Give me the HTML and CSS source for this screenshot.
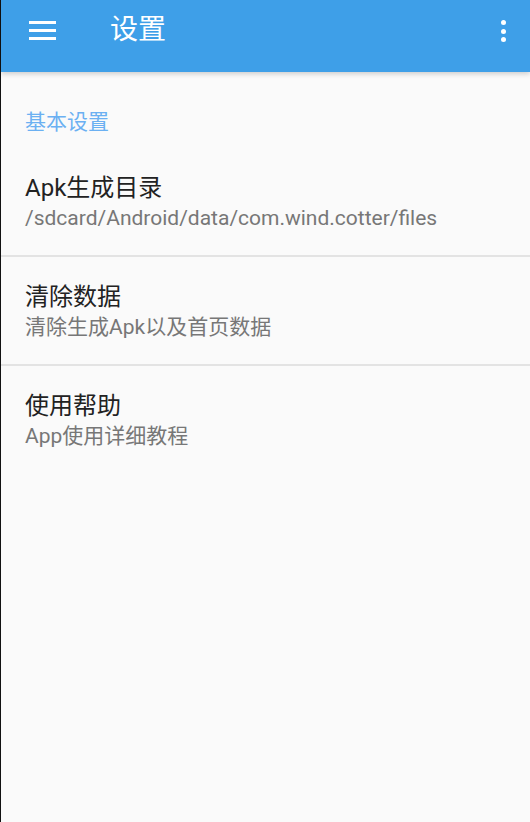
FILE: index.html
```html
<!DOCTYPE html>
<html>
<head>
  <meta charset="utf-8">
  <title>设置</title>
  <link rel="stylesheet" href="styles.css">
</head>
<body>

<div class="screen">
  <div class="toolbar">
    <div class="menu-btn">
      <span></span><span></span><span></span>
    </div>
    <div class="title">设置</div>
    <div class="more-btn">
      <i></i><i></i><i></i>
    </div>
  </div>

  <div class="category">基本设置</div>

  <div class="pref">
    <div class="pref-title">Apk生成目录</div>
    <div class="pref-summary">/sdcard/Android/data/com.wind.cotter/files</div>
  </div>

  <div class="pref">
    <div class="pref-title">清除数据</div>
    <div class="pref-summary">清除生成Apk以及首页数据</div>
  </div>

  <div class="pref last">
    <div class="pref-title">使用帮助</div>
    <div class="pref-summary">App使用详细教程</div>
  </div>
</div>

</body>
</html>
```

FILE: styles.css
```css
html, body { margin: 0; padding: 0; height: 100%; }
body { background: #fafafa; font-family: Roboto, "Noto Sans CJK SC", sans-serif; }
.screen { height: 100%; border-left: 1px solid #111; box-sizing: border-box; }

.toolbar { height: 72px; background: #3e9fe8; display: flex; align-items: flex-start; position: relative; z-index: 1; box-shadow: 0 2px 5px rgba(0,0,0,0.18); }
.menu-btn { width: 27px; margin: 21px 0 0 28px; display: flex; flex-direction: column; gap: 5px; }
.menu-btn span { display: block; height: 3px; background: #fff; }
.title { color: #fff; font-size: 28px; line-height: 32px; margin: 14px 0 0 54px; flex: 1; }
.more-btn { width: 6px; margin: 20px 23px 0 0; display: flex; flex-direction: column; gap: 3.5px; }
.more-btn i { display: block; width: 5px; height: 5px; border-radius: 50%; background: #fff; }

.category { color: #6bb0f2; font-size: 21px; line-height: 28px; padding: 36px 24px 12px; }

.pref { padding: 26px 24px 21px; border-bottom: 2px solid #e3e3e3; }
.pref.last { border-bottom: none; }
.pref-title { color: #222; font-size: 24px; line-height: 28px; }
.pref-summary { color: #777; font-size: 21px; line-height: 32px; }
```
